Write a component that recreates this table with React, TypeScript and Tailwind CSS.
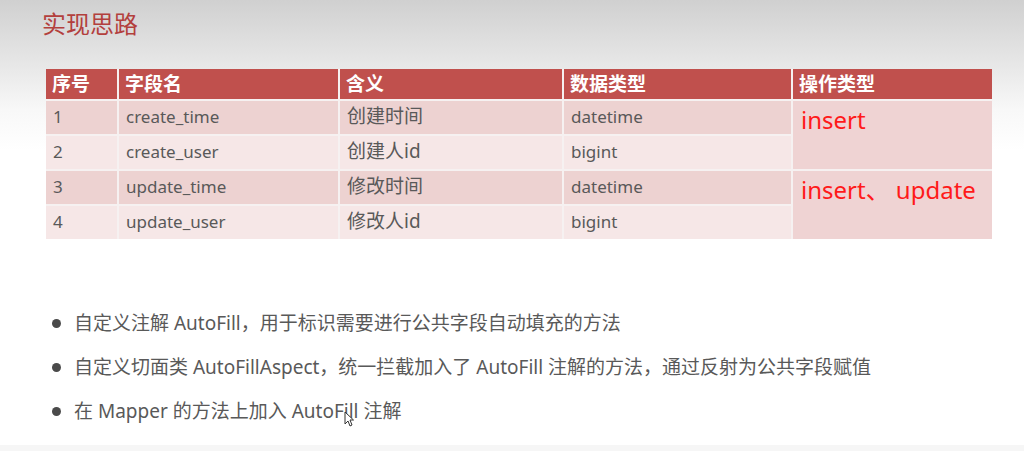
import React from 'react';

const font = { fontFamily: '"Noto Sans", "Noto Sans CJK SC", sans-serif' };

const rows = [
  { no: '1', field: 'create_time', meaning: '创建时间', type: 'datetime' },
  { no: '2', field: 'create_user', meaning: '创建人id', type: 'bigint' },
  { no: '3', field: 'update_time', meaning: '修改时间', type: 'datetime' },
  { no: '4', field: 'update_user', meaning: '修改人id', type: 'bigint' },
];

const bullets = [
  '自定义注解 AutoFill，用于标识需要进行公共字段自动填充的方法',
  '自定义切面类 AutoFillAspect，统一拦截加入了 AutoFill 注解的方法，通过反射为公共字段赋值',
  '在 Mapper 的方法上加入 AutoFill 注解',
];

const HeaderCell = ({ children }: { children: React.ReactNode }) => (
  <div className="bg-[#c0504d] text-white font-bold text-[19px] flex items-center pl-[6px]">{children}</div>
);

const App = () => {
  return (
    <div
      className="relative w-[1024px] h-[451px] overflow-hidden flex flex-col bg-[linear-gradient(to_bottom,#d0d0d0_0px,#e9e9e9_70px,#f8f8f8_110px,#ffffff_150px)]"
      style={font}
    >
      <h1 className="pl-[42px] pt-[12px] text-[24px] leading-none text-[#b3403d]">实现思路</h1>

      {/* table */}
      <div className="ml-[46px] mt-[33px] w-[946px] grid grid-cols-[71px_219px_222px_227px_199px] grid-rows-[30px_33px_33px_33px_33px] gap-x-[2px] gap-y-[2px] bg-[#f6f1f1]">
        <HeaderCell>序号</HeaderCell>
        <HeaderCell>字段名</HeaderCell>
        <HeaderCell>含义</HeaderCell>
        <HeaderCell>数据类型</HeaderCell>
        <HeaderCell>操作类型</HeaderCell>
        {rows.map((r, i) => {
          const bg = i % 2 === 0 ? 'bg-[#edd2d1]' : 'bg-[#f6e7e7]';
          const cell = `${bg} flex items-center pl-[7px] pb-[2px] text-[17px] text-[#595959]`;
          return (
            <React.Fragment key={r.no}>
              <div className={cell}>{r.no}</div>
              <div className={cell}>{r.field}</div>
              <div className={`${cell} text-[19px]`}>{r.meaning}</div>
              <div className={cell}>{r.type}</div>
              {i % 2 === 0 && (
                <div className="row-span-2 bg-[#efd3d3] pl-[8px] pt-[4px] text-[24px] leading-[30px] text-[#ff1a1a]">
                  {i === 0 ? 'insert' : 'insert、 update'}
                </div>
              )}
            </React.Fragment>
          );
        })}
      </div>

      {/* bullet list */}
      <ul className="mt-[71px] ml-[52px] flex flex-col gap-[17px] text-[19px] leading-[27px] text-[#595959]">
        {bullets.map((b, i) => (
          <li key={i} className="relative flex items-center gap-[13px]">
            <span className="w-[9px] h-[9px] rounded-full bg-[#4a4a4a] shrink-0" />
            <span>{b}</span>
          </li>
        ))}
      </ul>

      <div className="mt-auto h-[6px] bg-[#f6f6f6]" />

      {/* mouse cursor */}
      <svg className="absolute left-[344px] top-[411px]" width="10" height="16" viewBox="0 0 10 16">
        <path d="M1 1 L1 13 L4 10 L6 15 L8 14 L6 9 L9.5 9 Z" fill="#ffffff" stroke="#333" strokeWidth="1" strokeLinejoin="round" />
      </svg>
    </div>
  );
};

export default App;
